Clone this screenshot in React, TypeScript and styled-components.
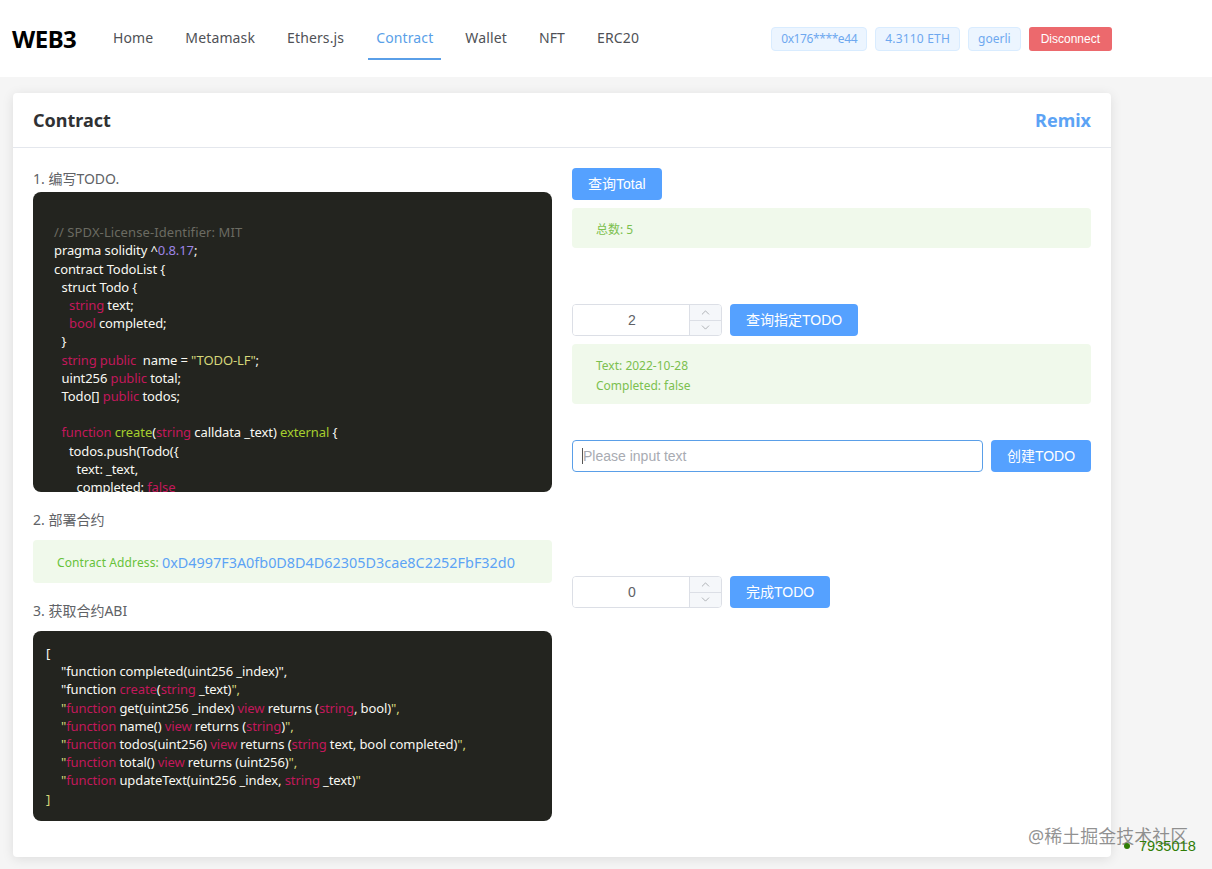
import React from "react";
import styled, { createGlobalStyle } from "styled-components";
import { ChevronDown, ChevronUp } from "lucide-react";

type Kind = "plain" | "kw" | "fn" | "str" | "num" | "com";
type Tok = [Kind, string];
type CodeLine = { indent?: number; toks: Tok[] };

const plain = (s: string): Tok => ["plain", s];
const kw = (s: string): Tok => ["kw", s];

const contractCode: CodeLine[] = [
  { toks: [] },
  { toks: [["com", "// SPDX-License-Identifier: MIT"]] },
  { toks: [plain("pragma solidity ^"), ["num", "0.8.17"], plain(";")] },
  { toks: [plain("contract TodoList {")] },
  { indent: 1, toks: [plain("struct Todo {")] },
  { indent: 2, toks: [kw("string"), plain(" text;")] },
  { indent: 2, toks: [kw("bool"), plain(" completed;")] },
  { indent: 1, toks: [plain("}")] },
  { indent: 1, toks: [kw("string public"), plain("  name = "), ["str", '"TODO-LF"'], plain(";")] },
  { indent: 1, toks: [plain("uint256 "), kw("public"), plain(" total;")] },
  { indent: 1, toks: [plain("Todo[] "), kw("public"), plain(" todos;")] },
  { toks: [] },
  {
    indent: 1,
    toks: [
      kw("function "),
      ["fn", "create"],
      plain("("),
      kw("string"),
      plain(" calldata _text) "),
      ["fn", "external"],
      plain(" {"),
    ],
  },
  { indent: 2, toks: [plain("todos.push(Todo({")] },
  { indent: 3, toks: [plain("text: _text,")] },
  { indent: 3, toks: [plain("completed: "), kw("false")] },
];

const q: Tok = ["str", '"'];
const abiCode: CodeLine[] = [
  { toks: [plain("[")] },
  { indent: 1, toks: [plain('"function completed(uint256 _index)",')] },
  { indent: 1, toks: [plain('"function '), kw("create"), plain("("), kw("string"), plain(" _text)"), ["str", '",']] },
  {
    indent: 1,
    toks: [
      q,
      kw("function"),
      plain(" get(uint256 _index) "),
      kw("view"),
      plain(" returns ("),
      kw("string"),
      plain(", bool)"),
      ["str", '",'],
    ],
  },
  {
    indent: 1,
    toks: [q, kw("function"), plain(" name() "), kw("view"), plain(" returns ("), kw("string"), plain(")"), ["str", '",']],
  },
  {
    indent: 1,
    toks: [
      q,
      kw("function"),
      plain(" todos(uint256) "),
      kw("view"),
      plain(" returns ("),
      kw("string"),
      plain(" text, bool completed)"),
      ["str", '",'],
    ],
  },
  {
    indent: 1,
    toks: [q, kw("function"), plain(" total() "), kw("view"), plain(" returns (uint256)"), ["str", '",']],
  },
  {
    indent: 1,
    toks: [q, kw("function"), plain(" updateText(uint256 _index, "), kw("string"), plain(" _text)"), q],
  },
  { toks: [["str", "]"]] },
];

const navItems = ["Home", "Metamask", "Ethers.js", "Contract", "Wallet", "NFT", "ERC20"];

const Code: React.FC<{ lines: CodeLine[]; $padX: number; $height: number; $step: number }> = ({
  lines,
  $padX,
  $height,
  $step,
}) => (
  <CodeBlock $padX={$padX} $height={$height}>
    {lines.map((line, i) => (
      <CodeRow key={i} $indent={(line.indent || 0) * $step}>
        {line.toks.map((t, j) => (
          <Token key={j} $kind={t[0]}>
            {t[1]}
          </Token>
        ))}
      </CodeRow>
    ))}
  </CodeBlock>
);

const NumberInput: React.FC<{ value: number }> = ({ value }) => (
  <Stepper>
    <StepperValue value={value} readOnly />
    <StepperControls>
      <StepperBtn>
        <ChevronUp size={13} strokeWidth={1.1} />
      </StepperBtn>
      <StepperBtn>
        <ChevronDown size={13} strokeWidth={1.1} />
      </StepperBtn>
    </StepperControls>
  </Stepper>
);

const App: React.FC = () => {
  return (
    <Page>
      <GlobalStyle />
      <Header>
        <Logo>WEB3</Logo>
        <Nav>
          {navItems.map((item) => (
            <NavItem key={item} $active={item === "Contract"}>
              {item}
            </NavItem>
          ))}
        </Nav>
        <Status>
          <Tag $track={-0.4}>0x176****e44</Tag>
          <Tag $track={0.2}>4.3110 ETH</Tag>
          <Tag>goerli</Tag>
          <DangerButton>Disconnect</DangerButton>
        </Status>
      </Header>

      <Main>
        <Card>
          <CardHeader>
            <CardTitle>Contract</CardTitle>
            <RemixLink>Remix</RemixLink>
          </CardHeader>
          <CardBody>
            <Column>
              <StepLabel>1. 编写TODO.</StepLabel>
              <Code lines={contractCode} $padX={21} $height={300} $step={7.5} />
              <StepLabel $spaced>2. 部署合约</StepLabel>
              <AddressAlert>
                <AddressLabel>Contract Address:</AddressLabel>
                <AddressLink>0xD4997F3A0fb0D8D4D62305D3cae8C2252FbF32d0</AddressLink>
              </AddressAlert>
              <StepLabel $spaced>3. 获取合约ABI</StepLabel>
              <Code lines={abiCode} $padX={13} $height={190} $step={15} />
            </Column>

            <Column>
              <Group $after={56}>
                <Row>
                  <PrimaryButton>查询Total</PrimaryButton>
                </Row>
                <ResultAlert>
                  <ResultLine>总数: 5</ResultLine>
                </ResultAlert>
              </Group>
              <Group $after={36}>
                <Row>
                  <NumberInput value={2} />
                  <PrimaryButton>查询指定TODO</PrimaryButton>
                </Row>
                <ResultAlert>
                  <ResultLine>Text: 2022-10-28</ResultLine>
                  <ResultLine>Completed: false</ResultLine>
                </ResultAlert>
              </Group>
              <Group $after={104}>
                <Row>
                  <TextField>
                    <TextInput placeholder="Please input text" />
                    <Caret />
                  </TextField>
                  <WideButton>创建TODO</WideButton>
                </Row>
              </Group>
              <Group $after={0}>
                <Row>
                  <NumberInput value={0} />
                  <PrimaryButton>完成TODO</PrimaryButton>
                </Row>
              </Group>
            </Column>
          </CardBody>
        </Card>
      </Main>

      <Watermark>@稀土掘金技术社区</Watermark>
      <Counter>
        <CounterDot />
        7935018
      </Counter>
    </Page>
  );
};

export default App;

const uiFont = `"Noto Sans", "Noto Sans CJK SC", sans-serif`;
const formFont = `"Liberation Sans", "Noto Sans CJK SC", sans-serif`;

const GlobalStyle = createGlobalStyle`
  html, body {
    margin: 0;
    padding: 0;
    height: 100%;
    overflow: hidden;
    background: #f5f5f5;
  }
  * {
    box-sizing: border-box;
  }
`;

const Page = styled.div`
  position: relative;
  height: 869px;
  font-family: ${uiFont};
  color: #303133;
`;

const Header = styled.header`
  display: flex;
  align-items: center;
  height: 77px;
  padding: 0 100px 0 12px;
  background: #fff;
`;

const Logo = styled.div`
  width: 93px;
  font-size: 24px;
  font-weight: 700;
  color: #000;
  letter-spacing: -0.5px;
`;

const Nav = styled.nav`
  display: flex;
  gap: 16px;
  height: 42px;
`;

const NavItem = styled.div<{ $active?: boolean }>`
  display: flex;
  align-items: center;
  padding: 0 8px;
  font-size: 14px;
  letter-spacing: 0.13px;
  color: ${(p) => (p.$active ? "#5a9fe8" : "#4f5156")};
  border-bottom: 2px solid ${(p) => (p.$active ? "#5a9fe8" : "transparent")};
`;

const Status = styled.div`
  display: flex;
  align-items: center;
  gap: 8px;
  margin-left: auto;
`;

const Tag = styled.span<{ $track?: number }>`
  display: inline-flex;
  align-items: center;
  height: 24px;
  padding: 0 9px;
  font-size: 12px;
  letter-spacing: ${(p) => p.$track || 0}px;
  color: #6ea8ef;
  background: #ecf5ff;
  border: 1px solid #d9ecff;
  border-radius: 4px;
`;

const DangerButton = styled.button`
  height: 24px;
  padding: 0 12px;
  font-family: ${formFont};
  font-size: 12px;
  color: #fff;
  background: #ec696d;
  border: none;
  border-radius: 3px;
`;

const Main = styled.main`
  padding: 16px 101px 12px 13px;
`;

const Card = styled.section`
  height: 764px;
  background: #fff;
  border-radius: 4px;
  box-shadow: 0 2px 12px rgba(0, 0, 0, 0.1);
`;

const CardHeader = styled.div`
  display: flex;
  align-items: center;
  justify-content: space-between;
  height: 55px;
  padding: 0 20px;
  border-bottom: 1px solid #e4e7ed;
`;

const CardTitle = styled.h2`
  margin: 0;
  font-size: 18px;
  font-weight: 700;
  color: #303133;
`;

const RemixLink = styled.a`
  font-size: 18px;
  font-weight: 700;
  color: #5ca3f5;
`;

const CardBody = styled.div`
  display: grid;
  grid-template-columns: 519px 519px;
  gap: 20px;
  padding: 20px;
`;

const Column = styled.div`
  display: flex;
  flex-direction: column;
  min-width: 0;
`;

const StepLabel = styled.div<{ $spaced?: boolean }>`
  height: 24px;
  line-height: ${(p) => (p.$spaced ? "24px" : "22px")};
  margin-top: ${(p) => (p.$spaced ? "16px" : "0")};
  margin-bottom: ${(p) => (p.$spaced ? "8px" : "0")};
  font-size: 14px;
  color: #606266;
`;

const CodeBlock = styled.pre<{ $padX: number; $height: number }>`
  height: ${(p) => p.$height}px;
  margin: 0;
  padding: 13px ${(p) => p.$padX}px 0;
  overflow: hidden;
  font-family: ${uiFont};
  font-size: 13px;
  line-height: 18.2px;
  letter-spacing: -0.1px;
  color: #f8f8f2;
  background: #23241f;
  border-radius: 8px;
`;

const CodeRow = styled.div<{ $indent: number }>`
  min-height: 18.2px;
  padding-left: ${(p) => p.$indent}px;
`;

const tokenColors: Record<Kind, string> = {
  plain: "#f8f8f2",
  kw: "#c2185b",
  fn: "#a6cf2e",
  str: "#d6d77a",
  num: "#9d85e6",
  com: "#6b6b62",
};

const Token = styled.span<{ $kind: Kind }>`
  color: ${(p) => tokenColors[p.$kind]};
  letter-spacing: ${(p) => (p.$kind === "com" ? "0.1px" : "inherit")};
`;

const AddressAlert = styled.div`
  display: flex;
  align-items: center;
  gap: 3px;
  height: 43px;
  padding: 1px 24px 0;
  background: #f0f9eb;
  border-radius: 4px;
`;

const AddressLabel = styled.span`
  font-size: 12px;
  letter-spacing: 0.12px;
  color: #67c23a;
`;

const AddressLink = styled.a`
  font-size: 14.4px;
  color: #5ca3f5;
`;

const Group = styled.div<{ $after: number }>`
  display: flex;
  flex-direction: column;
  gap: 8px;
  margin-bottom: ${(p) => p.$after}px;
`;

const Row = styled.div`
  display: flex;
  gap: 8px;
`;

const PrimaryButton = styled.button`
  height: 32px;
  padding: 0 16px 2px;
  font-family: ${formFont};
  font-size: 14px;
  color: #fff;
  background: #55a1ff;
  border: none;
  border-radius: 4px;
`;

const WideButton = styled(PrimaryButton)`
  flex: 0 0 100px;
  padding: 0 0 2px;
`;

const ResultAlert = styled.div`
  display: flex;
  flex-direction: column;
  min-height: 40px;
  padding: 12px 24px 8px;
  background: #f0f9eb;
  border-radius: 4px;
`;

const ResultLine = styled.div`
  font-size: 12px;
  line-height: 20px;
  color: #7cc04f;
`;

const Stepper = styled.div`
  display: flex;
  flex: 0 0 150px;
  height: 32px;
  overflow: hidden;
  border: 1px solid #dcdfe6;
  border-radius: 4px;
`;

const StepperValue = styled.input`
  flex: 1;
  min-width: 0;
  padding: 0 0 0 2px;
  font-family: ${formFont};
  font-size: 14px;
  text-align: center;
  color: #606266;
  background: #fff;
  border: none;
  outline: none;
`;

const StepperControls = styled.div`
  display: flex;
  flex: 0 0 32px;
  flex-direction: column;
  border-left: 1px solid #dcdfe6;
`;

const StepperBtn = styled.div`
  display: flex;
  flex: 1;
  align-items: center;
  justify-content: center;
  color: #808389;
  background: #f5f7fa;
  & + & {
    border-top: 1px solid #dcdfe6;
  }
`;

const TextField = styled.div`
  position: relative;
  flex: 1;
`;

const TextInput = styled.input`
  width: 100%;
  height: 32px;
  padding: 0 10px;
  font-family: ${formFont};
  font-size: 14px;
  background: #fff;
  border: 1px solid #5a9fe8;
  border-radius: 4px;
  outline: none;
  &::placeholder {
    color: #a8abb2;
  }
`;

const Caret = styled.span`
  position: absolute;
  top: 8px;
  left: 10px;
  width: 1px;
  height: 16px;
  background: #555;
`;

const Watermark = styled.div`
  position: absolute;
  top: 823px;
  left: 1028px;
  font-size: 18px;
  line-height: 26px;
  white-space: nowrap;
  color: rgba(110, 110, 110, 0.75);
`;

const Counter = styled.div`
  position: absolute;
  top: 836px;
  left: 1124px;
  display: flex;
  align-items: center;
  gap: 9px;
  font-family: ${formFont};
  font-size: 14.6px;
  line-height: 20px;
  white-space: nowrap;
  color: #2f7d05;
`;

const CounterDot = styled.span`
  width: 6px;
  height: 6px;
  border-radius: 50%;
  background: #2f7d05;
`;
